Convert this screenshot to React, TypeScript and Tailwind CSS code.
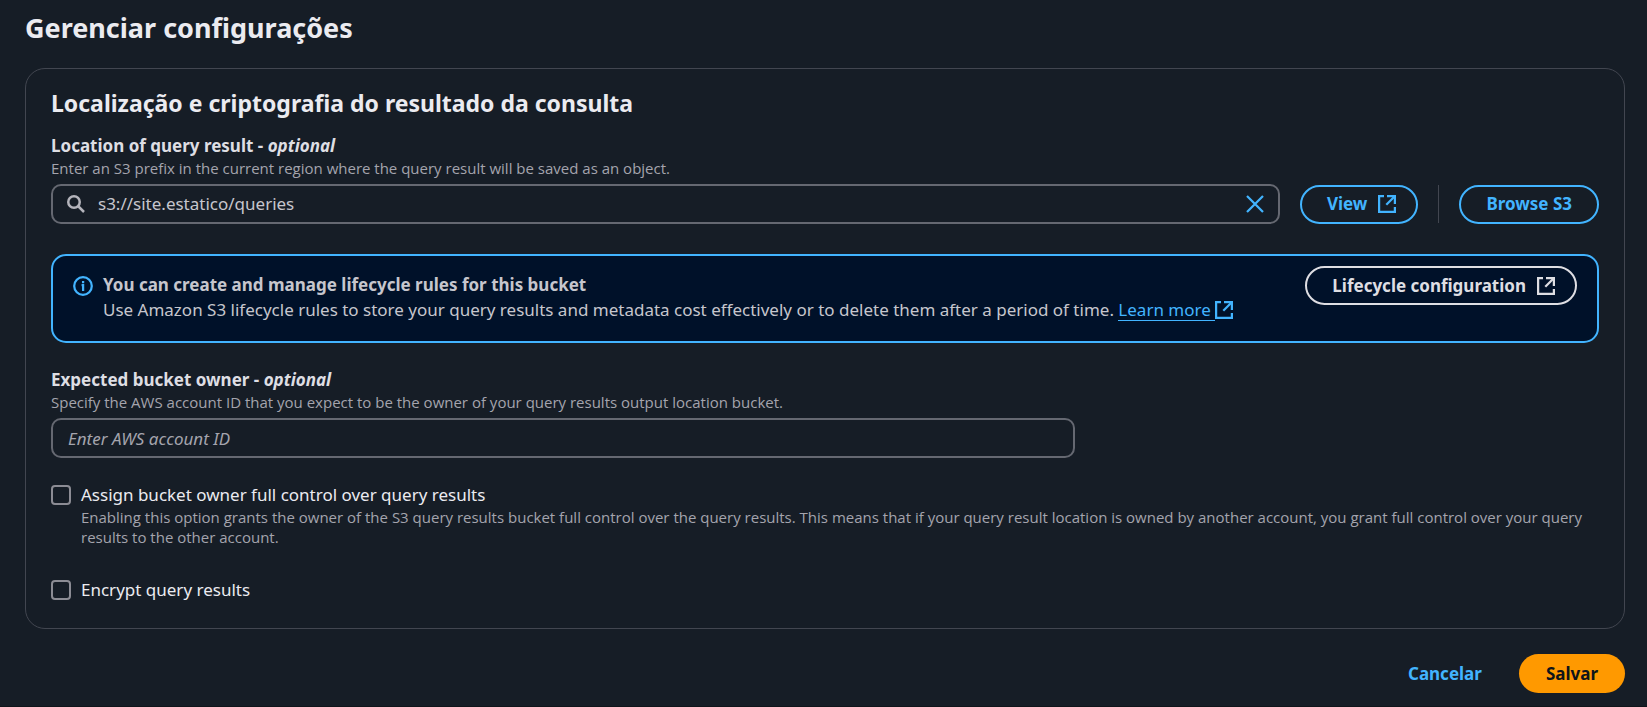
import { useState } from "react";
import type { ReactNode } from "react";

function ExternalIcon() {
  return (
    <svg viewBox="0 0 18 18" className="size-[18px] shrink-0" fill="none" stroke="currentColor" strokeWidth="2.25" aria-hidden="true">
      <path d="M6 1.1H1.1v15.8h15.8V12" />
      <path d="M9 1.1h7.9V9" />
      <path d="M16.5 1.5 8.3 9.7" />
    </svg>
  );
}

function FieldHeading({ htmlFor, label, hint }: { htmlFor: string; label: string; hint: string }) {
  return (
    <div className="mb-[6px]">
      <label htmlFor={htmlFor} className="block leading-6 font-bold text-[#dedee3]">
        {label} - <em>optional</em>
      </label>
      <p className="font-['Open_Sans',sans-serif] text-[15px] leading-5 text-[#a4a4ad]">{hint}</p>
    </div>
  );
}

function CheckboxRow({ id, label, children }: { id: string; label: string; children?: ReactNode }) {
  return (
    <div className="flex items-start gap-[10px]">
      <input
        id={id}
        type="checkbox"
        className="mt-[2px] size-5 shrink-0 appearance-none rounded-[4px] border-2 border-[#8c8c94] checked:border-[#42b4ff] checked:bg-[#42b4ff]"
      />
      <div>
        <label htmlFor={id} className="block leading-6 text-[#ebebf0]">
          {label}
        </label>
        {children}
      </div>
    </div>
  );
}

export default function App() {
  const [location, setLocation] = useState("s3://site.estatico/queries");

  return (
    <main className="min-h-screen border-b border-[#0f141a] bg-[#161d26] pt-[10px] pr-[22px] pb-3 pl-[25px] font-['Noto_Sans',sans-serif] text-[17px] text-[#c6c6cd]">
      <h1 className="text-[27px] leading-9 font-bold text-[#ebebf0]">Gerenciar configurações</h1>

      <section className="mt-[22px] rounded-[20px] border border-[#424650] px-[25px] pt-[17px] pb-[26px]">
        <h2 className="text-[23px] leading-[34px] font-bold text-[#ebebf0]">
          Localização e criptografia do resultado da consulta
        </h2>

        <div className="mt-[14px]">
          <FieldHeading
            htmlFor="location"
            label="Location of query result"
            hint="Enter an S3 prefix in the current region where the query result will be saved as an object."
          />
          <div className="flex items-center gap-5">
            <div className="flex h-10 flex-1 items-center gap-[13px] rounded-[10px] border-2 border-[#656871] px-[14px]">
              <svg viewBox="0 0 18 18" className="size-[18px] shrink-0 text-[#b4b4bb]" fill="none" stroke="currentColor" strokeWidth="2.5" aria-hidden="true">
                <circle cx="7" cy="7" r="5.75" />
                <path d="m11 11 6 6" />
              </svg>
              <input
                id="location"
                value={location}
                onChange={(e) => setLocation(e.target.value)}
                className="min-w-0 flex-1 bg-transparent text-[#c6c6cd] outline-none"
              />
              <button type="button" aria-label="Clear" onClick={() => setLocation("")} className="text-[#42b4ff]">
                <svg viewBox="0 0 18 18" className="size-[18px]" fill="none" stroke="currentColor" strokeWidth="2.25" aria-hidden="true">
                  <path d="m1 1 16 16M17 1 1 17" />
                </svg>
              </button>
            </div>
            <a href="#view" className="flex h-[39px] items-center gap-[11px] rounded-full border-2 border-[#42b4ff] pr-5 pl-[25px] font-bold text-[#42b4ff]">
              View
              <ExternalIcon />
            </a>
            <div className="h-[38px] w-px bg-[#424650]" />
            <button type="button" className="h-[39px] rounded-full border-2 border-[#42b4ff] px-[25px] font-bold text-[#42b4ff]">
              Browse S3
            </button>
          </div>
        </div>

        <div className="mt-[30px] flex items-start gap-[10px] rounded-[15px] border-2 border-[#42b4ff] bg-[#001129] pt-[10px] pr-5 pb-[19px] pl-5">
          <svg viewBox="0 0 20 20" className="mt-[10px] size-5 shrink-0 text-[#42b4ff]" fill="none" stroke="currentColor" strokeWidth="2.25" aria-hidden="true">
            <circle cx="10" cy="10" r="8.8" />
            <path d="M10.1 15V9.1H8.6M10.1 5v2.3" />
          </svg>
          <div className="flex-1 pt-[6px] leading-[25px]">
            <p className="font-bold">You can create and manage lifecycle rules for this bucket</p>
            <p>
              Use Amazon S3 lifecycle rules to store your query results and metadata cost effectively or to delete them after a period of time.{" "}
              <a href="#learn" className="inline-flex items-center text-[#42b4ff]">
                <span className="border-b border-[#42b4ff] pr-1 leading-[21px]">Learn more</span>
                <ExternalIcon />
              </a>
            </p>
          </div>
          <a href="#lifecycle" className="flex h-[39px] items-center gap-[11px] rounded-full border-2 border-[#dedee3] pr-5 pl-[25px] font-bold text-[#dedee3]">
            Lifecycle configuration
            <ExternalIcon />
          </a>
        </div>

        <div className="mt-[25px]">
          <FieldHeading
            htmlFor="owner"
            label="Expected bucket owner"
            hint="Specify the AWS account ID that you expect to be the owner of your query results output location bucket."
          />
          <div className="grid grid-cols-12 gap-6">
            <input
              id="owner"
              placeholder="Enter AWS account ID"
              className="col-span-8 h-10 rounded-[10px] border-2 border-[#656871] bg-transparent px-[15px] text-[#c6c6cd] outline-none placeholder:text-[#a4a4ad] placeholder:italic"
            />
          </div>
        </div>

        <div className="mt-[25px] flex flex-col gap-[31px]">
          <CheckboxRow id="full-control" label="Assign bucket owner full control over query results">
            <p className="font-['Open_Sans',sans-serif] text-[15px] leading-5 text-[#a4a4ad]">
              Enabling this option grants the owner of the S3 query results bucket full control over the query results. This means that if your query result location is owned by another account, you grant full control over your query results to the other account.
            </p>
          </CheckboxRow>
          <CheckboxRow id="encrypt" label="Encrypt query results" />
        </div>
      </section>

      <div className="mt-[25px] flex justify-end gap-[10px] font-bold">
        <button type="button" className="h-[39px] px-[27px] text-[#42b4ff]">
          Cancelar
        </button>
        <button type="button" className="h-[39px] rounded-full bg-[#ff9900] px-[27px] text-[#0f141a]">
          Salvar
        </button>
      </div>
    </main>
  );
}
